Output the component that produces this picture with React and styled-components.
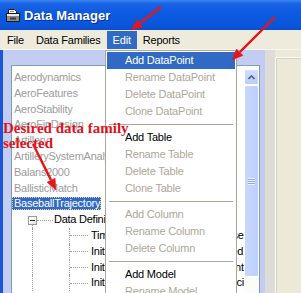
import React from 'react';
import styled, { createGlobalStyle } from 'styled-components';

const GlobalStyle = createGlobalStyle`
  html, body {
    margin: 0;
    padding: 0;
  }
  body {
    background: #ece9d8;
    overflow: hidden;
  }
`;

const Window = styled.div`
  position: relative;
  width: 301px;
  height: 293px;
  overflow: hidden;
  display: flex;
  flex-direction: column;
  background: #ece9d8;
  font-family: 'Liberation Sans', Arial, sans-serif;
  font-size: 11px;
`;

const TitleBar = styled.div`
  flex: none;
  height: 30px;
  display: flex;
  align-items: center;
  gap: 3px;
  padding-left: 5px;
  background: linear-gradient(
    to bottom,
    #3c87f4 0%,
    #1a63e4 12%,
    #0c5ae0 45%,
    #0a55dc 85%,
    #0b4ecf 100%
  );
`;

const Title = styled.span`
  color: #fff;
  font-weight: bold;
  font-size: 13px;
  letter-spacing: 0.1px;
  text-shadow: 1px 1px 0 #0b2f8a;
`;

const MenuBar = styled.div`
  flex: none;
  height: 20px;
  display: flex;
  align-items: center;
  padding-left: 1px;
  background: #eeebdd;
  border-bottom: 1px solid #f6f5ee;
  box-sizing: border-box;
`;

const MenuTitle = styled.span`
  height: 18px;
  line-height: 18px;
  padding: 0 6px;
  letter-spacing: -0.2px;
  color: ${(p) => (p.$open ? '#fff' : '#000')};
  background: ${(p) => (p.$open ? '#316ac5' : 'transparent')};
`;

const Body = styled.div`
  flex: 1;
  min-height: 0;
  display: flex;
`;

const FrameEdge = styled.div`
  flex: none;
  width: 3px;
  background: #1d55d9;
`;

const LeftPane = styled.div`
  flex: none;
  width: 262px;
  box-sizing: border-box;
  padding: 15px 5px 0 8px;
  background: #c3cdf1;
`;

const ListBox = styled.div`
  height: 260px;
  display: flex;
  border: 1px solid #7f9db9;
  background: #fff;
`;

const ListContent = styled.div`
  flex: 1;
  min-width: 0;
  overflow: hidden;
  padding-top: 4px;
  white-space: nowrap;
  letter-spacing: -0.25px;
`;

const Row = styled.div`
  height: 15.8px;
  line-height: 15.8px;
  padding-left: 2px;
  color: ${(p) => (p.$dark ? '#000' : '#9d9d9d')};
`;

const SelectedLabel = styled.span`
  display: inline-block;
  margin-left: -2px;
  padding: 0 1px 0 2px;
  line-height: 13px;
  color: #fff;
  background: #316ac5;
  outline: 1px dotted #e8d39a;
  outline-offset: -1px;
`;

const BranchRow = styled.div`
  position: relative;
  height: 15.8px;
  display: flex;
  align-items: center;
  padding-left: 16px;

  &::before {
    content: '';
    position: absolute;
    left: 20px;
    top: 12px;
    bottom: 0;
    border-left: 1px dotted #a0a0a0;
  }
`;

const Expander = styled.span`
  flex: none;
  width: 9px;
  height: 9px;
  box-sizing: border-box;
  border: 1px solid #919b9c;
  background: linear-gradient(135deg, #fff 40%, #dcd9cc);
  display: flex;
  align-items: center;
  justify-content: center;

  &::after {
    content: '';
    width: 5px;
    height: 1px;
    background: #222;
  }
`;

const Connector = styled.span`
  flex: none;
  width: ${(p) => p.$w}px;
  border-top: 1px dotted #a0a0a0;
`;

const LeafRow = styled.div`
  position: relative;
  height: 15.8px;
  display: flex;
  align-items: stretch;
  padding-left: 57px;

  &::before {
    content: '';
    position: absolute;
    left: 20px;
    top: 0;
    bottom: 0;
    border-left: 1px dotted #a0a0a0;
  }
`;

const LeafStem = styled.span`
  flex: none;
  width: 19px;
  border-left: 1px dotted #a0a0a0;
  display: flex;
  align-items: center;

  &::after {
    content: '';
    width: 18px;
    border-top: 1px dotted #a0a0a0;
  }
`;

const TreeLabel = styled.span`
  margin-left: ${(p) => p.$gap}px;
  line-height: 15.8px;
  color: #000;
`;

const ScrollBar = styled.div`
  flex: none;
  width: 15px;
  display: flex;
  flex-direction: column;
  padding-top: 3px;
  box-sizing: border-box;
  background: #fbfbf8;
`;

const ScrollButton = styled.div`
  height: 16px;
  box-sizing: border-box;
  border: 1px solid #fff;
  border-radius: 2px;
  background: linear-gradient(to bottom, #d2defc, #b9ccf8);
  display: flex;
  align-items: center;
  justify-content: center;
`;

const Thumb = styled.div`
  height: 192px;
  box-sizing: border-box;
  border: 1px solid #fff;
  border-radius: 2px;
  background: linear-gradient(to right, #c9d8fd, #bccffb);
  display: flex;
  align-items: center;
  justify-content: center;
`;

const Grip = styled.div`
  width: 7px;
  height: 7px;
  background: repeating-linear-gradient(
    to bottom,
    #eef3ff 0px,
    #eef3ff 1px,
    #8ca6e6 1px,
    #8ca6e6 2px
  );
`;

const Splitter = styled.div`
  flex: none;
  width: 10px;
  background: #dedcd6;
`;

const RightPane = styled.div`
  flex: 1;
  padding-top: 7px;
  background: #ece9d8;
`;

const RightBox = styled.div`
  height: 100%;
  border-top: 1px solid #fbfaf6;
  border-left: 1px solid #fbfaf6;
  box-shadow: inset 1px 1px 0 #d3d0c4;
`;

const Dropdown = styled.div`
  position: absolute;
  left: 105px;
  top: 50px;
  width: 132px;
  box-sizing: border-box;
  padding: 1px;
  border: 1px solid #aca899;
  background: #fff;
`;

const Entry = styled.div`
  height: 17px;
  line-height: 17px;
  padding-left: 18px;
  letter-spacing: -0.2px;
  color: ${(p) => (p.$active ? '#fff' : p.$disabled ? '#aca899' : '#000')};
  background: ${(p) => (p.$active ? '#316ac5' : 'transparent')};
`;

const Separator = styled.div`
  height: 9px;
  display: flex;
  align-items: center;
  padding: 0 2px;

  &::after {
    content: '';
    flex: 1;
    border-top: 1px solid #aca899;
  }
`;

const Note = styled.div`
  position: absolute;
  left: 3px;
  top: 121px;
  font-family: 'Liberation Serif', 'Times New Roman', serif;
  font-weight: bold;
  font-size: 15px;
  line-height: 15px;
  color: #e2121b;
  white-space: nowrap;
`;

const Overlay = styled.svg`
  position: absolute;
  left: 0;
  top: 0;
  pointer-events: none;
`;

const AppIcon = () => (
  <svg width="16" height="16" viewBox="0 0 16 16">
    <path d="M3.5 7.5 V2.5 H9.5 L11.5 4.5 V7.5" fill="#fff" stroke="#1a1a1a" />
    <path d="M5 4.5 H9" stroke="#888" />
    <rect x="1.5" y="6.5" width="13" height="8" fill="#8d8d8d" stroke="#1a1a1a" />
    <rect x="2" y="7" width="12" height="2" fill="#e8e8e8" />
    <rect x="5" y="10.5" width="6" height="2" fill="#3a3a3a" />
  </svg>
);

const UpChevron = () => (
  <svg width="7" height="5" viewBox="0 0 7 5">
    <path d="M0.5 4 L3.5 1 L6.5 4" fill="none" stroke="#4d6185" strokeWidth="1.6" />
  </svg>
);

const Arrow = ({ x1, y1, x2, y2 }) => {
  const len = Math.hypot(x2 - x1, y2 - y1);
  const ux = (x2 - x1) / len;
  const uy = (y2 - y1) / len;
  const bx = x2 - ux * 11;
  const by = y2 - uy * 11;
  const head = [
    `${x2},${y2}`,
    `${bx - uy * 4.5},${by + ux * 4.5}`,
    `${bx + uy * 4.5},${by - ux * 4.5}`,
  ].join(' ');
  return (
    <g fill="#e3161c" stroke="#e3161c">
      <line x1={x1} y1={y1} x2={bx} y2={by} strokeWidth="2.4" />
      <polygon points={head} strokeWidth="0.5" />
    </g>
  );
};

const families = [
  'Aerodynamics',
  'AeroFeatures',
  'AeroStability',
  'AeroFinDesign',
  'Artillery',
  'ArtillerySystemAnalysis',
  'Balans2000',
  'BallisticMatch',
];

const leaves = [
  'Time Step Size for Output Phase',
  'Initial Release Height and Speed',
  'Initial Ball Height at Launch Point',
  'Initial Ball Release Vertical Velocity',
];

const editMenu = [
  { label: 'Add DataPoint', active: true },
  { label: 'Rename DataPoint', disabled: true },
  { label: 'Delete DataPoint', disabled: true },
  { label: 'Clone DataPoint', disabled: true },
  { sep: true },
  { label: 'Add Table' },
  { label: 'Rename Table', disabled: true },
  { label: 'Delete Table', disabled: true },
  { label: 'Clone Table', disabled: true },
  { sep: true },
  { label: 'Add Column', disabled: true },
  { label: 'Rename Column', disabled: true },
  { label: 'Delete Column', disabled: true },
  { sep: true },
  { label: 'Add Model' },
  { label: 'Rename Model', disabled: true },
];

const App = () => {
  return (
    <Window>
      <GlobalStyle />
      <TitleBar>
        <AppIcon />
        <Title>Data Manager</Title>
      </TitleBar>
      <MenuBar>
        <MenuTitle>File</MenuTitle>
        <MenuTitle>Data Families</MenuTitle>
        <MenuTitle $open>Edit</MenuTitle>
        <MenuTitle>Reports</MenuTitle>
      </MenuBar>
      <Body>
        <FrameEdge />
        <LeftPane>
          <ListBox>
            <ListContent>
              {families.map((name) => (
                <Row key={name}>{name}</Row>
              ))}
              <Row>
                <SelectedLabel>BaseballTrajectory</SelectedLabel>
              </Row>
              <BranchRow>
                <Expander />
                <Connector $w={16} />
                <TreeLabel $gap={1}>Data Definitions</TreeLabel>
              </BranchRow>
              {leaves.map((name) => (
                <LeafRow key={name}>
                  <LeafStem />
                  <TreeLabel $gap={2}>{name}</TreeLabel>
                </LeafRow>
              ))}
            </ListContent>
            <ScrollBar>
              <ScrollButton>
                <UpChevron />
              </ScrollButton>
              <Thumb>
                <Grip />
              </Thumb>
            </ScrollBar>
          </ListBox>
        </LeftPane>
        <Splitter />
        <RightPane>
          <RightBox />
        </RightPane>
      </Body>

      <Dropdown>
        {editMenu.map((item, i) =>
          item.sep ? (
            <Separator key={i} />
          ) : (
            <Entry key={i} $active={item.active} $disabled={item.disabled}>
              {item.label}
            </Entry>
          )
        )}
      </Dropdown>

      <Note>
        Desired data family
        <br />
        selected
      </Note>

      <Overlay width="301" height="293">
        <Arrow x1={161} y1={7} x2={131} y2={30} />
        <Arrow x1={275} y1={17} x2={232} y2={60} />
        <Arrow x1={33} y1={144} x2={56} y2={190} />
      </Overlay>
    </Window>
  );
};

export default App;
